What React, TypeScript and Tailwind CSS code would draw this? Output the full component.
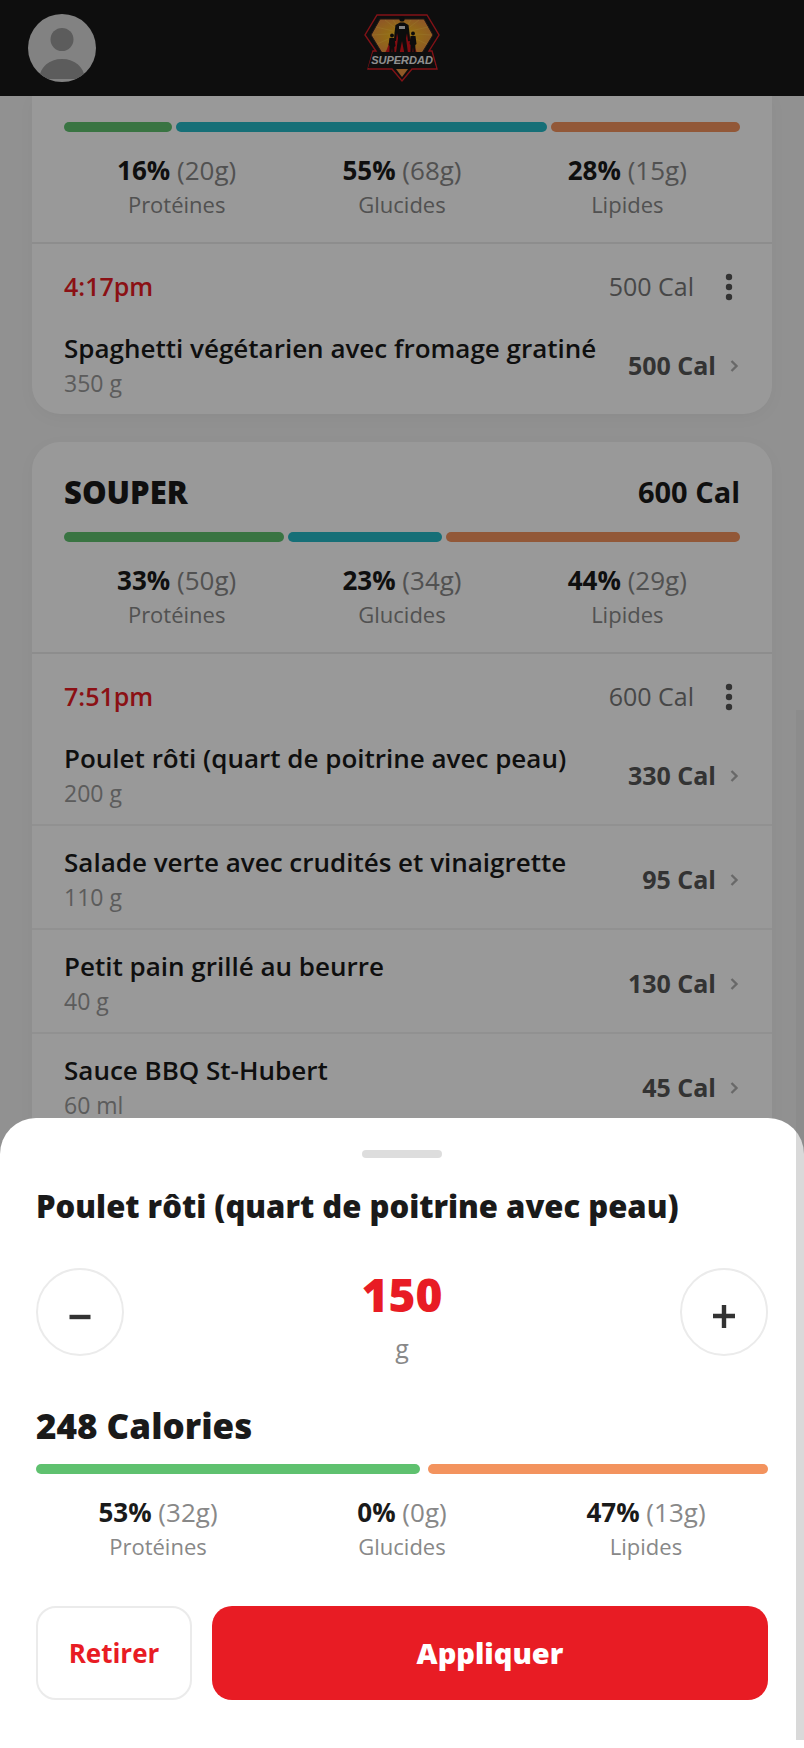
import { useState } from "react"

type Macro = { label: string; percent: number; grams: number; color: string }

type FoodItem = { name: string; quantity: string; calories: number }

const GREEN = "bg-[#5fc16f]"
const TEAL = "bg-[#25b9c6]"
const ORANGE = "bg-[#f3935e]"

const macros = (values: [number, number][]): Macro[] => [
  { label: "Protéines", percent: values[0][0], grams: values[0][1], color: GREEN },
  { label: "Glucides", percent: values[1][0], grams: values[1][1], color: TEAL },
  { label: "Lipides", percent: values[2][0], grams: values[2][1], color: ORANGE },
]

const lunchItems: FoodItem[] = [{ name: "Spaghetti végétarien avec fromage gratiné", quantity: "350 g", calories: 500 }]

const dinnerItems: FoodItem[] = [
  { name: "Poulet rôti (quart de poitrine avec peau)", quantity: "200 g", calories: 330 },
  { name: "Salade verte avec crudités et vinaigrette", quantity: "110 g", calories: 95 },
  { name: "Petit pain grillé au beurre", quantity: "40 g", calories: 130 },
  { name: "Sauce BBQ St-Hubert", quantity: "60 ml", calories: 45 },
]

const Logo = () => (
  <svg viewBox="0 0 78 70" className="h-[70px] w-[78px]" role="img" aria-label="Superdad">
    <defs>
      <radialGradient id="sun" cx="50%" cy="50%" r="55%">
        <stop offset="0%" stopColor="#ffd21f" />
        <stop offset="45%" stopColor="#f5b326" />
        <stop offset="100%" stopColor="#ee9440" />
      </radialGradient>
    </defs>
    <path d="M14 2h50l12 20-10 16h3l5 18H49L39 68 29 56H5l5-18h3L2 22z" fill="#181818" stroke="#d81e26" strokeWidth="1.4" />
    <path d="M17 6h44l9 16-11 18H19L8 22z" fill="url(#sun)" stroke="#3a2323" strokeWidth="1" />
    <path
      d="M39 20 22 7M39 20 30 7M39 20 48 7M39 20 56 7M39 20 65 14M39 20 68 22M39 20 64 31M39 20 13 14M39 20 10 22M39 20 14 31"
      stroke="#ffc94a"
      strokeWidth="1"
      opacity=".5"
    />
    <path d="M34 12c-2 8-3 18-8 27l6 1h16l5-1c-5-9-7-19-9-27z" fill="#d8141c" />
    <path d="M27 24c-1 6-2 11-5 16h8zM48 24l6 16h-7z" fill="#d8141c" />
    <circle cx="39" cy="6" r="2.6" fill="#141414" />
    <path d="M32.500 12 37 9.500h4l4.500 2.500 1 8 .5 8-2 .2-1-8-1 5 2 15h-3.600L39 28l-2.400 12H33l2-15-1-5-1 8-2-.2.500-8z" fill="#141414" />
    <path d="M36 13h6v3h-6z" fill="#dcdcdc" />
    <circle cx="29" cy="22.5" r="1.9" fill="#141414" />
    <path d="M26.500 25h5l1 8-1.200 1 .2 6h-2l-.5-5-.6 5h-2l.2-7-1-1z" fill="#141414" />
    <circle cx="50" cy="20.5" r="1.9" fill="#141414" />
    <path d="M47.500 23h5l1 8-1.200 1 .2 8h-2l-.5-6-.6 6h-2l.2-8-1-1z" fill="#141414" />
    <path d="M10 39h58l5 16H5z" fill="#181818" />
    <text
      x="39"
      y="51"
      textAnchor="middle"
      fontSize="11"
      fontStyle="italic"
      fontWeight="700"
      fill="#f0f0f0"
      fontFamily="'Liberation Sans Narrow', 'Liberation Sans', sans-serif"
    >
      SUPERDAD
    </text>
    <path d="M33 56h12l-6 8z" fill="#ee9440" />
  </svg>
)

const MacroSummary = ({ items }: { items: Macro[] }) => (
  <div>
    <div className="flex h-[10px] gap-1">
      {items.map((macro) => (
        <div key={macro.label} className={`${macro.color} rounded-md`} style={{ flex: `${macro.percent} 1 0%` }} />
      ))}
    </div>
    <div className="mt-5 grid grid-cols-3 text-center">
      {items.map((macro) => (
        <div key={macro.label}>
          <div className="text-[26px] leading-9 text-[#888]">
            <span className="font-bold text-[#1a1a1a]">{macro.percent}%</span> ({macro.grams}g)
          </div>
          <div className="text-[22px] leading-8 text-[#888]">{macro.label}</div>
        </div>
      ))}
    </div>
  </div>
)

const ItemRow = ({ item }: { item: FoodItem }) => (
  <li className="border-b-2 border-[#f2f2f2] last:border-b-0">
    <button type="button" className="flex w-full items-center px-8 pt-[18px] pb-[14px] text-left">
      <span className="min-w-0 flex-1">
        <span className="block text-[26px] leading-9 font-semibold whitespace-nowrap text-[#1a1a1a]">{item.name}</span>
        <span className="block text-[23px] leading-[34px] text-[#999]">{item.quantity}</span>
      </span>
      <span className="text-[25px] leading-9 font-bold text-[#555]">{item.calories} Cal</span>
      <svg viewBox="0 0 10 16" className="ml-[14px] h-4 w-[10px]" fill="none" stroke="#b0b0b0" strokeWidth="2.4" aria-hidden="true">
        <path d="M1.500 4 6.500 9l-5 5" />
      </svg>
    </button>
  </li>
)

const MealEntry = ({ time, calories, items }: { time: string; calories: number; items: FoodItem[] }) => (
  <div className="border-t-2 border-[#ebebeb]">
    <div className="flex items-center px-8 pt-6 pb-2">
      <span className="flex-1 text-[25px] leading-9 font-semibold text-[#e81c24]">{time}</span>
      <span className="text-[25px] leading-9 text-[#777]">{calories} Cal</span>
      <button type="button" aria-label={`Options ${time}`} className="ml-6 flex h-9 w-[22px] items-center justify-center">
        <svg viewBox="0 0 8 30" className="h-[30px] w-2" fill="#555" aria-hidden="true">
          <circle cx="4" cy="6" r="3.2" />
          <circle cx="4" cy="16" r="3.2" />
          <circle cx="4" cy="26" r="3.2" />
        </svg>
      </button>
    </div>
    <ul>
      {items.map((item) => (
        <ItemRow key={item.name} item={item} />
      ))}
    </ul>
  </div>
)

export default function App() {
  const [quantity, setQuantity] = useState(150)

  return (
    <div className="relative h-screen overflow-hidden bg-[#f2f2f2] font-['Open_Sans','Noto_Sans',sans-serif]">
      <header className="relative z-10 flex h-24 items-center justify-center bg-[#181818]">
        <a href="#profil" aria-label="Profil" className="absolute left-7">
          <svg viewBox="0 0 68 68" className="size-[68px]" aria-hidden="true">
            <clipPath id="avatar">
              <circle cx="34" cy="34" r="34" />
            </clipPath>
            <g clipPath="url(#avatar)">
              <path d="M0 0h68v68H0z" fill="#d9d9d9" />
              <circle cx="34" cy="25.5" r="11.5" fill="#999" />
              <path d="M11 65c1-12 10-20 23-20s22 8 23 20z" fill="#999" />
            </g>
          </svg>
        </a>
        <Logo />
      </header>

      <main className="flex flex-col gap-7 px-8">
        <section className="rounded-b-[28px] bg-white pt-[26px] shadow-[0_4px_16px_rgba(0,0,0,0.04)]">
          <div className="px-8 pb-[22px]">
            <MacroSummary items={macros([[16, 20], [55, 68], [28, 15]])} />
          </div>
          <MealEntry time="4:17pm" calories={500} items={lunchItems} />
        </section>

        <section className="rounded-[28px] bg-white pt-7 pb-8 shadow-[0_4px_16px_rgba(0,0,0,0.04)]">
          <div className="px-8 pb-[22px]">
            <div className="mb-[18px] flex items-center justify-between text-[#1a1a1a]">
              <h2 className="text-[31px] leading-[44px] font-extrabold">SOUPER</h2>
              <span className="text-[29px] leading-[44px] font-bold">600 Cal</span>
            </div>
            <MacroSummary items={macros([[33, 50], [23, 34], [44, 29]])} />
          </div>
          <MealEntry time="7:51pm" calories={600} items={dinnerItems} />
        </section>
      </main>

      <div className="absolute inset-0 z-20 bg-black/40" />

      <div role="dialog" aria-labelledby="sheet-title" className="absolute inset-x-0 bottom-0 z-30 rounded-t-[36px] bg-white px-9 pt-8 pb-12">
        <div className="mx-auto h-2 w-20 rounded-full bg-[#ddd]" />
        <h2 id="sheet-title" className="mt-[26px] text-[31px] leading-[44px] font-extrabold text-[#1a1a1a]">
          Poulet rôti (quart de poitrine avec peau)
        </h2>

        <div className="mt-[30px] flex items-center justify-between">
          <button
            type="button"
            aria-label="Diminuer"
            onClick={() => setQuantity(Math.max(0, quantity - 10))}
            className="flex size-[88px] items-center justify-center rounded-full border-2 border-[#ebebeb] pt-2 text-[#333]"
          >
            <svg viewBox="0 0 24 24" className="size-6" stroke="currentColor" strokeWidth="4.4" aria-hidden="true">
              <path d="M1.500 13h21" />
            </svg>
          </button>
          <div className="pt-[6px] text-center">
            <div className="text-[46px] leading-[60px] font-extrabold text-[#e81c24]">{quantity}</div>
            <div className="mt-[6px] text-[25px] leading-9 text-[#888]">g</div>
          </div>
          <button
            type="button"
            aria-label="Augmenter"
            onClick={() => setQuantity(quantity + 10)}
            className="flex size-[88px] items-center justify-center rounded-full border-2 border-[#ebebeb] pt-2 text-[#333]"
          >
            <svg viewBox="0 0 24 24" className="size-6" stroke="currentColor" strokeWidth="4.4" aria-hidden="true">
              <path d="M1 12h22M12 1v23" />
            </svg>
          </button>
        </div>

        <div className="mt-[38px] mb-4 text-[35px] leading-[44px] font-extrabold text-[#1a1a1a]">248 Calories</div>
        <MacroSummary items={macros([[53, 32], [0, 0], [47, 13]])} />

        <div className="mt-11 flex gap-5">
          <button type="button" className="h-[94px] w-[156px] rounded-[20px] border-2 border-[#ebebeb] text-[26px] font-bold text-[#e81c24]">
            Retirer
          </button>
          <button type="button" className="h-[94px] flex-1 rounded-[20px] bg-[#e81c24] text-[29px] font-extrabold text-white">
            Appliquer
          </button>
        </div>
      </div>

      {/* scrollbar thumb */}
      <div className="pointer-events-none absolute top-[710px] right-0 bottom-2 z-40 w-2 bg-[#808080]/30" />
    </div>
  )
}
